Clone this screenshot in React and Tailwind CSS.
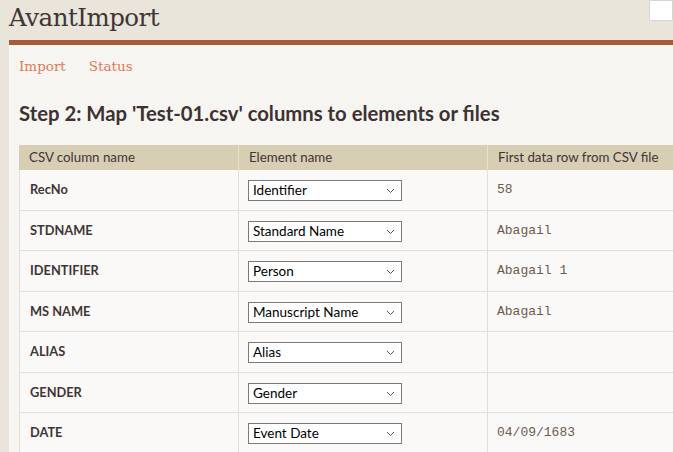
import React from 'react'

const rows = [
  { col: 'RecNo', el: 'Identifier', data: '58' },
  { col: 'STDNAME', el: 'Standard Name', data: 'Abagail' },
  { col: 'IDENTIFIER', el: 'Person', data: 'Abagail 1' },
  { col: 'MS NAME', el: 'Manuscript Name', data: 'Abagail' },
  { col: 'ALIAS', el: 'Alias', data: '' },
  { col: 'GENDER', el: 'Gender', data: '' },
  { col: 'DATE', el: 'Event Date', data: '04/09/1683' },
]

function FakeSelect({ value }) {
  return (
    <div className="flex items-center justify-between w-[154px] h-[21px] border border-[#7a7a7a] bg-white pl-[4px] pr-[6px] text-[13.5px] text-black font-['Lato',sans-serif]">
      <span className="leading-none">{value}</span>
      <svg width="9" height="6" viewBox="0 0 9 6" className="text-[#555]">
        <path d="M1 1l3.5 3.5L8 1" fill="none" stroke="currentColor" strokeWidth="1" />
      </svg>
    </div>
  )
}

export default function App() {
  return (
    <div className="w-[673px] h-[452px] overflow-hidden bg-[#e9e5da] font-['Lato',sans-serif]">
      <div className="flex items-start justify-between h-[40px]">
        <div className="pl-[9px] pt-[3px] text-[24.5px] leading-[30px] text-[#3f3535] font-['DejaVu_Serif',serif] tracking-[-0.5px]">AvantImport</div>
        <div className="w-[24px] h-[21px] bg-white border border-[#d8d6d0] rounded-bl-[2px]" />
      </div>
      <div className="ml-[9px] h-[5px] bg-[#a65a3b]" />
      <div className="ml-[9px] h-[407px] bg-[#f6f5f1] pl-[10px]">
        <div className="flex gap-[23px] pt-[12px] text-[13.5px] leading-[18px] text-[#e07b53] font-['DejaVu_Serif',serif]">
          <span>Import</span>
          <span>Status</span>
        </div>
        <h1 className="mt-[26px] text-[20.3px] leading-[24px] font-bold text-[#3d3131]">
          Step 2: Map 'Test-01.csv' columns to elements or files
        </h1>
        <div className="mt-[20px]">
          <div className="grid grid-cols-[219px_249px_1fr] h-[25px] bg-[#d8ceb4] text-[13.3px] text-[#3f3535] items-center">
            <div className="pl-[10px] h-full flex items-center">CSV column name</div>
            <div className="pl-[10px] h-full flex items-center border-l border-[#e8e2d2]">Element name</div>
            <div className="pl-[10px] h-full flex items-center border-l border-[#e8e2d2]">First data row from CSV file</div>
          </div>
          {rows.map((r, i) => (
            <div
              key={i}
              className={`grid grid-cols-[219px_249px_1fr] bg-[#faf9f7] border-b border-[#e2dfd8] ${i % 2 === 0 ? 'h-[41px]' : 'h-[40px]'}`}
            >
              <div className="pl-[10px] pt-[10px] text-[12.8px] font-bold text-[#3f3535] border-l border-[#e2dfd8]">{r.col}</div>
              <div className="pl-[9px] pt-[10px] border-l border-[#e2dfd8]">
                <FakeSelect value={r.el} />
              </div>
              <div className="pl-[9px] pt-[12px] text-[13px] leading-[16px] text-[#6b5a50] font-['Liberation_Mono',monospace] border-l border-[#e2dfd8]">{r.data}</div>
            </div>
          ))}
        </div>
      </div>
    </div>
  )
}
